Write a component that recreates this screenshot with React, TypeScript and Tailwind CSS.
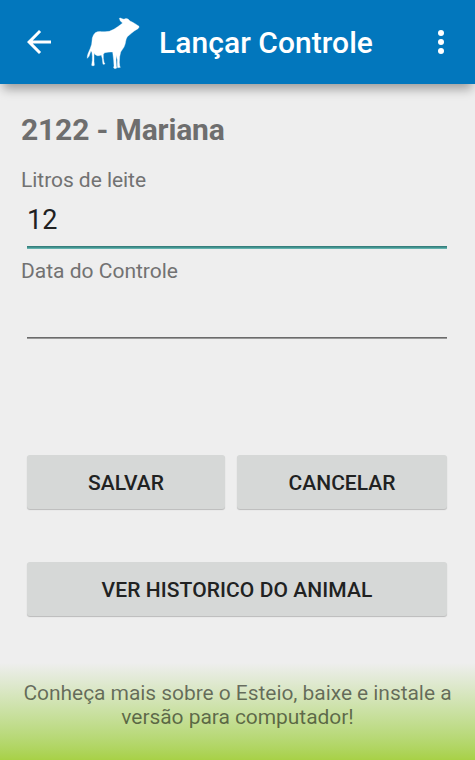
import { useState } from "react";

const BackIcon = () => (
  <svg viewBox="0 0 24 24" className="h-9 w-9 fill-white">
    <path d="M20 11H7.83l5.59-5.59L12 4l-8 8 8 8 1.41-1.41L7.83 13H20v-2z" />
  </svg>
);

const MoreIcon = () => (
  <svg viewBox="0 0 24 24" className="h-9 w-9 fill-white">
    <circle cx="12" cy="6" r="2" />
    <circle cx="12" cy="12" r="2" />
    <circle cx="12" cy="18" r="2" />
  </svg>
);

const CowLogo = () => (
  <svg viewBox="0 0 195 195" className="h-[65px] w-[65px] shrink-0 fill-white">
    <path
      d="M118 25 Q121 23 126 26 L132 28 Q137 24 144 27 L150 33 L158 37 L165 41 Q169 43 171 45 L177 49 Q178 53 174 56 L164 62 L154 70 L142 80 Q138 86 137 94 Q136 103 132 111 Q126 120 122 126 L119 140 L118 157 L119 168 L121 172 L113 173 L112 166 L112 149 L109 136 L108 150 L109 167 L110 174 Q106 177 101 174 L102 167 L101 150 L98 126 Q87 125 74 128 L70 133 L70 145 L72 157 L75 162 L69 163 L68 156 L67 146 L64 135 Q58 138 52 137 L46 134 L43 129 L42 137 L42 154 L43 166 Q39 169 35 166 L37 151 L37 139 L36 128 L33 122 L27 139 L22 145 Q21 139 24 131 L31 115 L35 103 L37 84 Q40 73 46 68 Q52 64 65 65 Q77 66 88 64 Q102 59 112 51 Q121 45 127 40 L127 38 L121 33 Z"
      className="stroke-white/60 stroke-2"
    />
  </svg>
);

const Button = ({
  label,
  className,
}: {
  label: string;
  className: string;
}) => (
  <button
    type="button"
    className={`h-[54px] rounded-[3px] bg-[#d6d8d7] pt-[3px] text-[21px] font-medium text-[#212222] shadow-[0_1px_1px_rgba(0,0,0,0.22)] ${className}`}
  >
    {label}
  </button>
);

const App = () => {
  const [litros, setLitros] = useState("12");
  const [data, setData] = useState("");

  return (
    <div className="flex h-[760px] w-[475px] flex-col overflow-hidden bg-[#eeeeee] font-['Roboto',sans-serif]">
      <header className="z-10 flex h-[84px] shrink-0 items-center bg-[#0277bd] pr-4 pl-[21px] shadow-[0_8px_10px_-3px_rgba(0,0,0,0.34)]">
        <BackIcon />
        <div className="ml-[23px]">
          <CowLogo />
        </div>
        <h1 className="ml-[14px] flex-1 pt-[2px] text-[30px] leading-9 font-medium tracking-[0.05px] text-white">
          Lançar Controle
        </h1>
        <MoreIcon />
      </header>

      <main className="flex flex-1 flex-col px-[21px] pt-7">
        <h2 className="text-[30px] leading-9 font-bold tracking-[-0.15px] text-[#6e6e6e]">
          2122 - Mariana
        </h2>

        <label
          htmlFor="litros"
          className="mt-5 text-[21px] leading-[25px] tracking-[-0.05px] text-[#727272]"
        >
          Litros de leite
        </label>
        <input
          id="litros"
          value={litros}
          onChange={(e) => setLitros(e.target.value)}
          className="mr-[7px] ml-[6px] h-[54px] border-b border-[#367f7c] text-[27px] text-[#212121] shadow-[0_1px_0_#449390,0_2px_0_#63b2ad] outline-none"
        />

        <label
          htmlFor="data"
          className="mt-3 text-[21px] leading-[25px] text-[#727272]"
        >
          Data do Controle
        </label>
        <input
          id="data"
          value={data}
          onChange={(e) => setData(e.target.value)}
          className="mr-[7px] ml-[6px] h-[54px] border-b border-[#6b6b6b] text-[27px] text-[#212121] shadow-[0_1px_0_#999999] outline-none"
        />

        <div className="mt-[117px] flex gap-3 pr-[7px] pl-[6px]">
          <Button label="SALVAR" className="w-[198px]" />
          <Button label="CANCELAR" className="flex-1" />
        </div>
        <div className="mt-[53px] flex pr-[7px] pl-[6px]">
          <Button
            label="VER HISTORICO DO ANIMAL"
            className="flex-1 tracking-[0.08px]"
          />
        </div>
      </main>

      <footer className="h-[97px] shrink-0 bg-linear-to-b from-[#eeeeee] to-[#a8d146] px-5 pt-[18px] text-center text-[21px] leading-6 tracking-[-0.06px] text-black/54">
        Conheça mais sobre o Esteio, baixe e instale a versão para computador!
      </footer>
    </div>
  );
};

export default App;
